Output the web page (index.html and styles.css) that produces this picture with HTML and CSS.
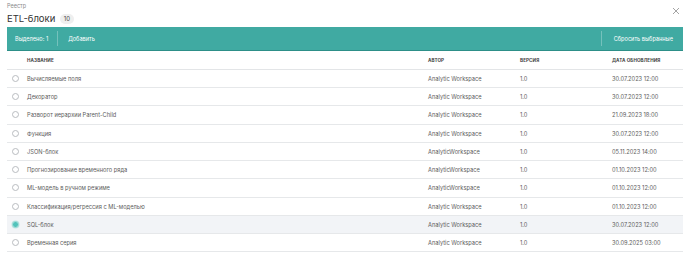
FILE: index.html
```html
<!DOCTYPE html>
<html lang="ru">
<head>
<meta charset="utf-8">
<link rel="stylesheet" href="styles.css">
</head>
<body>
<div class="page">
  <div class="top">
    <div class="titles">
      <div class="crumb">Реестр</div>
      <div class="title-row"><span class="title">ETL-блоки</span><span class="badge">10</span></div>
    </div>
    <svg class="close" width="8" height="8" viewBox="0 0 8 8"><path d="M1 1L7 7M7 1L1 7" stroke="#9a9a9a" stroke-width="0.9" fill="none"/></svg>
  </div>
  <div class="bar">
    <div class="bar-left">
      <span class="bar-item">Выделено: 1</span>
      <span class="sep"></span>
      <span class="bar-item">Добавить</span>
    </div>
    <div class="bar-right">
      <span class="sep"></span>
      <span class="bar-item">Сбросить выбранные</span>
    </div>
  </div>
  <div class="table">
    <div class="row head">
      <div class="c-radio"></div>
      <div class="c-name">НАЗВАНИЕ</div>
      <div class="c-author">АВТОР</div>
      <div class="c-ver">ВЕРСИЯ</div>
      <div class="c-date">ДАТА ОБНОВЛЕНИЯ</div>
    </div>
    <div class="row"><div class="c-radio"><span class="radio"></span></div><div class="c-name">Вычисляемые поля</div><div class="c-author">Analytic Workspace</div><div class="c-ver">1.0</div><div class="c-date">30.07.2023 12:00</div></div>
    <div class="row"><div class="c-radio"><span class="radio"></span></div><div class="c-name">Декоратор</div><div class="c-author">Analytic Workspace</div><div class="c-ver">1.0</div><div class="c-date">30.07.2023 12:00</div></div>
    <div class="row"><div class="c-radio"><span class="radio"></span></div><div class="c-name">Разворот иерархии Parent-Child</div><div class="c-author">Analytic Workspace</div><div class="c-ver">1.0</div><div class="c-date">21.09.2023 18:00</div></div>
    <div class="row"><div class="c-radio"><span class="radio"></span></div><div class="c-name">Функция</div><div class="c-author">Analytic Workspace</div><div class="c-ver">1.0</div><div class="c-date">30.07.2023 12:00</div></div>
    <div class="row"><div class="c-radio"><span class="radio"></span></div><div class="c-name">JSON-блок</div><div class="c-author">AnalyticWorkspace</div><div class="c-ver">1.0</div><div class="c-date">05.11.2023 14:00</div></div>
    <div class="row"><div class="c-radio"><span class="radio"></span></div><div class="c-name">Прогнозирование временного ряда</div><div class="c-author">AnalyticWorkspace</div><div class="c-ver">1.0</div><div class="c-date">01.10.2023 12:00</div></div>
    <div class="row"><div class="c-radio"><span class="radio"></span></div><div class="c-name">ML-модель в ручном режиме</div><div class="c-author">AnalyticWorkspace</div><div class="c-ver">1.0</div><div class="c-date">01.10.2023 12:00</div></div>
    <div class="row"><div class="c-radio"><span class="radio"></span></div><div class="c-name">Классификация/регрессия с ML-моделью</div><div class="c-author">Analytic Workspace</div><div class="c-ver">1.0</div><div class="c-date">01.10.2023 12:00</div></div>
    <div class="row selected"><div class="c-radio"><span class="radio on"></span></div><div class="c-name">SQL-блок</div><div class="c-author">Analytic Workspace</div><div class="c-ver">1.0</div><div class="c-date">30.07.2023 12:00</div></div>
    <div class="row"><div class="c-radio"><span class="radio"></span></div><div class="c-name">Временная серия</div><div class="c-author">Analytic Workspace</div><div class="c-ver">1.0</div><div class="c-date">30.09.2025 03:00</div></div>
  </div>
</div>
</body>
</html>
```
FILE: styles.css
```css
html, body { margin: 0; padding: 0; background: #fff; }
body { font-family: Inter, "Noto Sans", "Liberation Sans", sans-serif; color: #4a4a4a; }
.page { width: 690px; height: 266px; padding: 0 7px; box-sizing: border-box; }
.top { display: flex; justify-content: space-between; align-items: flex-start; height: 27px; }
.titles { padding-top: 3px; }
.crumb { font-size: 5.5px; color: #8a8a8a; line-height: 7px; }
.title-row { display: flex; align-items: center; gap: 5px; margin-top: 3px; }
.title { font-size: 9.5px; color: #333; line-height: 11px; }
.badge { font-size: 6px; color: #444; background: #efefef; border-radius: 6px; padding: 0 3.5px; line-height: 10px; }
.close { margin-top: 7px; margin-right: 3px; }
.bar { height: 24px; background: #40aaa2; border-bottom: 1px solid #2d8f88; box-sizing: border-box; display: flex; justify-content: space-between; align-items: center; color: #fff; font-size: 5.6px; }
.bar-left, .bar-right { display: flex; align-items: center; height: 100%; }
.bar-left { padding-left: 8px; }
.bar-right { padding-right: 10px; }
.bar-item { white-space: nowrap; }
.sep { width: 1px; height: 15px; background: rgba(255,255,255,0.28); margin: 0 10px 0 9px; }
.bar-right .sep { margin: 0 12px 0 0; }
.table { display: flex; flex-direction: column; padding-top: 0.5px; }
.row { display: flex; align-items: center; height: 18.25px; border-bottom: 1px solid #e6e8ea; box-sizing: border-box; font-size: 5.7px; color: #5c5c5c; }
.row.head { font-size: 4.6px; font-weight: 700; color: #444; letter-spacing: 0.1px; border-bottom-color: #e3e5e7; }
.row.selected { background: #f2f4f7; }
.c-radio { width: 20px; display: flex; justify-content: flex-start; }
.radio { margin-left: 4.5px; }
.c-name { width: 401px; }
.c-author { width: 92px; }
.c-ver { width: 92px; }
.c-date { flex: 1; }
.radio { width: 5px; height: 5px; border: 0.8px solid #b9bcc0; border-radius: 50%; display: block; box-sizing: content-box; }
.radio.on { border-color: #a8dedb; background: #52c3bb; box-shadow: 0 0 0 0.5px #bfe7e4; }
```
